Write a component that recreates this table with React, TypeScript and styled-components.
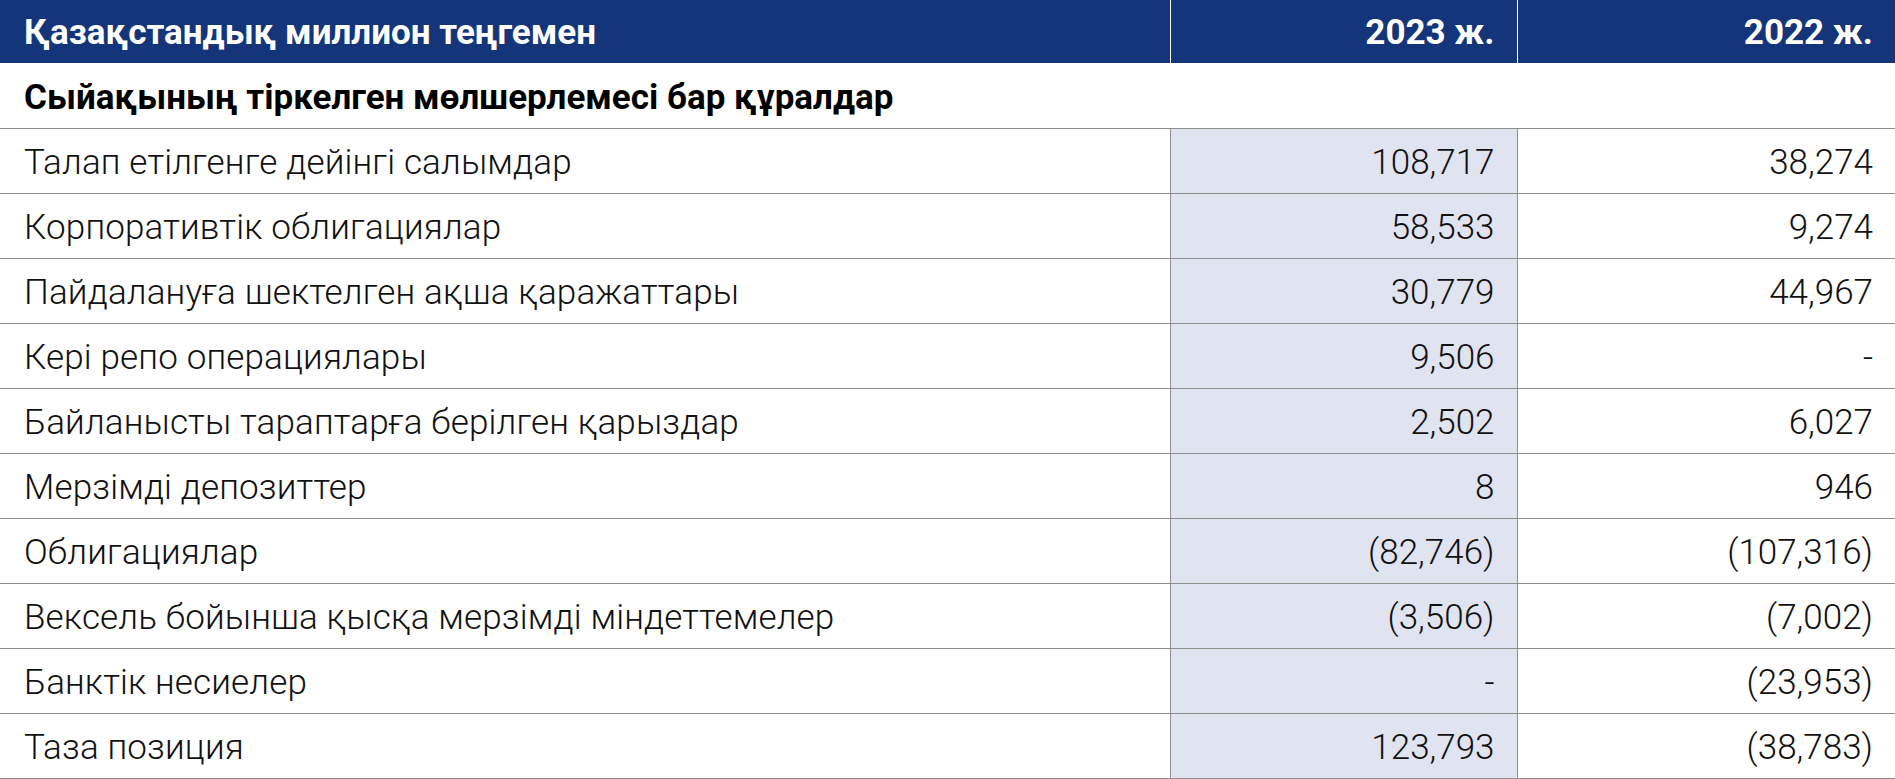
import styled, {createGlobalStyle} from "styled-components";

const GlobalStyle = createGlobalStyle`
  html, body {
    margin: 0;
    padding: 0;
    background: #ffffff;
  }
`

const StyledTable = styled.table`
  width: 100%;
  border-collapse: collapse;
  table-layout: fixed;
  font-family: 'Roboto', 'Liberation Sans', sans-serif;
  font-size: 35px;
  color: #111111;
`

const HeadCell = styled.th<{ $align?: "left" | "right" }>`
  /* Header cell */
  height: 63px;
  padding: 2px 22px 0 24px;
  box-sizing: border-box;
  background: #15357a;
  color: #ffffff;
  font-weight: 700;
  text-align: ${p => p.$align || "left"};
  border-left: 1px solid #ffffff;

  &:first-child {
    border-left: none;
  }
`

const Row = styled.tr`
  border-bottom: 1px solid #8f8f8f;
`

const SectionCell = styled.td`
  height: 65px;
  padding: 4px 22px 0 24px;
  box-sizing: border-box;
  font-weight: 700;
  color: #000000;
`

const Cell = styled.td<{ $shaded?: boolean; $numeric?: boolean }>`
  height: 65px;
  padding: 4px 22px 0 24px;
  box-sizing: border-box;
  font-weight: 300;
  letter-spacing: ${p => (p.$numeric ? "0" : "0.15px")};
  text-align: ${p => (p.$numeric ? "right" : "left")};
  background: ${p => (p.$shaded ? "#e0e3f0" : "transparent")};
  border-left: ${p => (p.$numeric ? "1px solid #8f8f8f" : "none")};
`

const rows: [string, string, string][] = [
    ["Талап етілгенге дейінгі салымдар", "108,717", "38,274"],
    ["Корпоративтік облигациялар", "58,533", "9,274"],
    ["Пайдалануға шектелген ақша қаражаттары", "30,779", "44,967"],
    ["Кері репо операциялары", "9,506", "-"],
    ["Байланысты тараптарға берілген қарыздар", "2,502", "6,027"],
    ["Мерзімді депозиттер", "8", "946"],
    ["Облигациялар", "(82,746)", "(107,316)"],
    ["Вексель бойынша қысқа мерзімді міндеттемелер", "(3,506)", "(7,002)"],
    ["Банктік несиелер", "-", "(23,953)"],
    ["Таза позиция", "123,793", "(38,783)"],
]

export default function App() {
    return (
        <>
            <GlobalStyle/>
            <StyledTable>
                <colgroup>
                    <col style={{width: "1170px"}}/>
                    <col style={{width: "347px"}}/>
                    <col/>
                </colgroup>
                <thead>
                <tr>
                    <HeadCell>Қазақстандық миллион теңгемен</HeadCell>
                    <HeadCell $align="right">2023 ж.</HeadCell>
                    <HeadCell $align="right">2022 ж.</HeadCell>
                </tr>
                </thead>
                <tbody>
                <Row>
                    <SectionCell colSpan={3}>Сыйақының тіркелген мөлшерлемесі бар құралдар</SectionCell>
                </Row>
                {rows.map(([label, a, b]) => (
                    <Row key={label}>
                        <Cell>{label}</Cell>
                        <Cell $numeric $shaded>{a}</Cell>
                        <Cell $numeric>{b}</Cell>
                    </Row>
                ))}
                </tbody>
            </StyledTable>
        </>
    );
}
